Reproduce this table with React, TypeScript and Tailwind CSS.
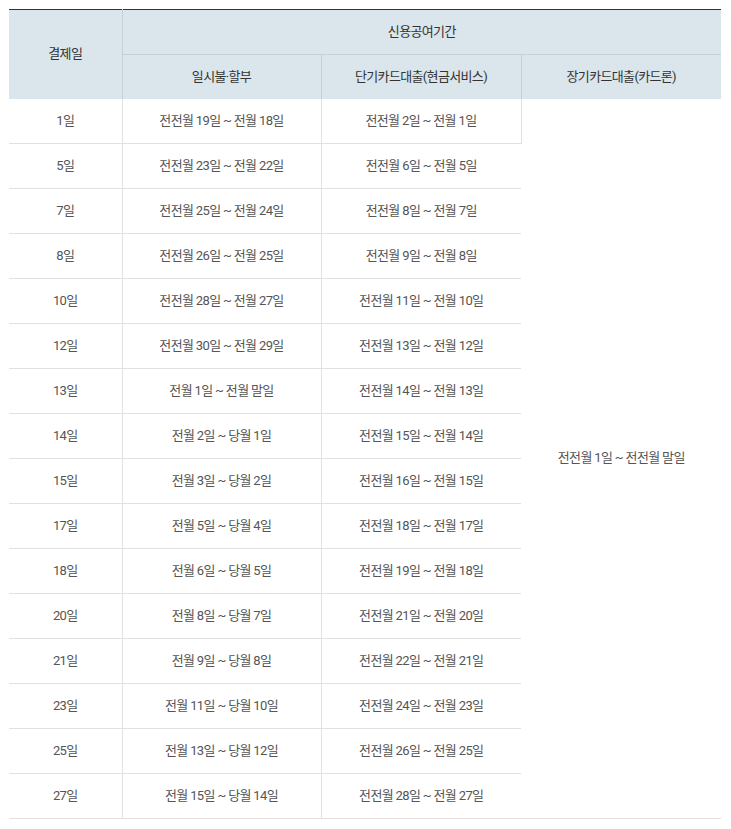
const rows: [string, string, string][] = [
  ['1일', '전전월 19일 ~ 전월 18일', '전전월 2일 ~ 전월 1일'],
  ['5일', '전전월 23일 ~ 전월 22일', '전전월 6일 ~ 전월 5일'],
  ['7일', '전전월 25일 ~ 전월 24일', '전전월 8일 ~ 전월 7일'],
  ['8일', '전전월 26일 ~ 전월 25일', '전전월 9일 ~ 전월 8일'],
  ['10일', '전전월 28일 ~ 전월 27일', '전전월 11일 ~ 전월 10일'],
  ['12일', '전전월 30일 ~ 전월 29일', '전전월 13일 ~ 전월 12일'],
  ['13일', '전월 1일 ~ 전월 말일', '전전월 14일 ~ 전월 13일'],
  ['14일', '전월 2일 ~ 당월 1일', '전전월 15일 ~ 전월 14일'],
  ['15일', '전월 3일 ~ 당월 2일', '전전월 16일 ~ 전월 15일'],
  ['17일', '전월 5일 ~ 당월 4일', '전전월 18일 ~ 전월 17일'],
  ['18일', '전월 6일 ~ 당월 5일', '전전월 19일 ~ 전월 18일'],
  ['20일', '전월 8일 ~ 당월 7일', '전전월 21일 ~ 전월 20일'],
  ['21일', '전월 9일 ~ 당월 8일', '전전월 22일 ~ 전월 21일'],
  ['23일', '전월 11일 ~ 당월 10일', '전전월 24일 ~ 전월 23일'],
  ['25일', '전월 13일 ~ 당월 12일', '전전월 26일 ~ 전월 25일'],
  ['27일', '전월 15일 ~ 당월 14일', '전전월 28일 ~ 전월 27일'],
];

const th = 'font-normal text-[#333] bg-[#dae5ec] border-[#c3d1da]';
const td = 'h-[45px] p-0 text-center border-b border-[#e1e1e1]';

export default function App() {
  return (
    <div
      className="bg-white pt-[9px] pl-[9px] pr-[10px] pb-3 text-[13px] leading-[18px] tracking-[-0.05em] text-[#555]"
      style={{ fontFamily: "Roboto, 'Noto Sans CJK KR', sans-serif" }}
    >
      <table className="w-[712px] table-fixed border-collapse border-t border-t-[#333]">
        <colgroup>
          <col className="w-[113px]" />
          <col className="w-[199px]" />
          <col className="w-[200px]" />
          <col className="w-[200px]" />
        </colgroup>
        <thead>
          <tr className="h-[45px]">
            <th rowSpan={2} className={`${th} border-r`}>
              결제일
            </th>
            <th colSpan={3} className={`${th} border-b`}>
              신용공여기간
            </th>
          </tr>
          <tr className="h-[44px]">
            <th className={`${th} border-r`}>일시불·할부</th>
            <th className={`${th} border-r`}>단기카드대출(현금서비스)</th>
            <th className={th}>장기카드대출(카드론)</th>
          </tr>
        </thead>
        <tbody>
          {rows.map(([day, a, b], i) => (
            <tr key={day}>
              <td className={`${td} border-r border-r-[#e1e1e1]`}>{day}</td>
              <td className={`${td} border-r border-r-[#e1e1e1]`}>{a}</td>
              <td
                className={`${td} ${i === 0 ? 'border-r border-r-[#e1e1e1]' : ''}`}
              >
                {b}
              </td>
              {i === 0 && (
                <td rowSpan={rows.length} className={td}>
                  전전월 1일 ~ 전전월 말일
                </td>
              )}
            </tr>
          ))}
        </tbody>
      </table>
    </div>
  );
}
